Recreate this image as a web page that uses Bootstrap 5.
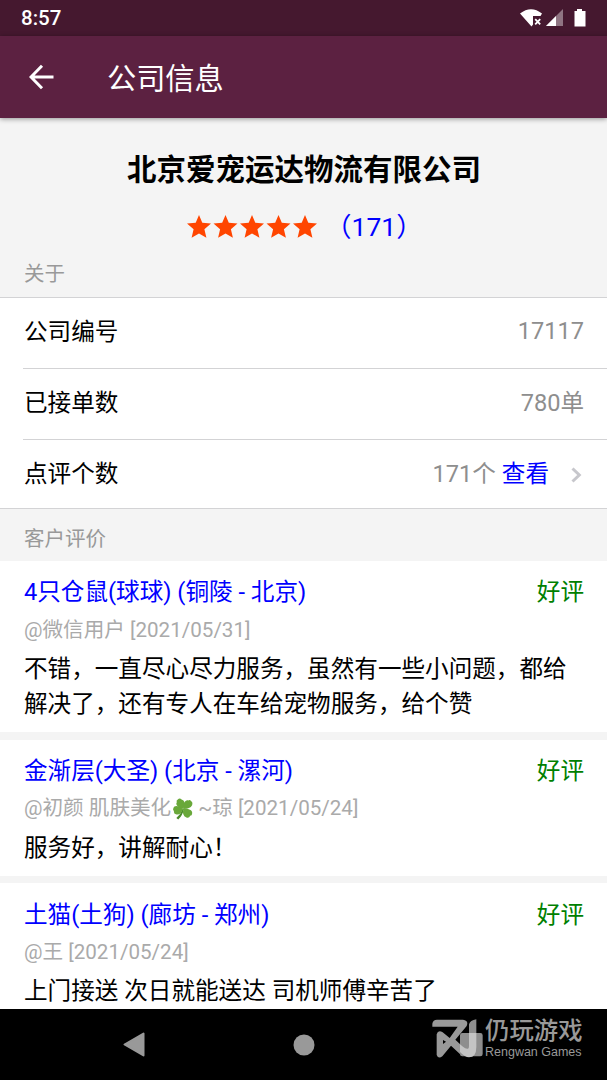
<!DOCTYPE html>
<html lang="zh-CN">
<head>
<meta charset="utf-8">
<meta name="viewport" content="width=device-width, initial-scale=1">
<title>公司信息</title>
<link href="https://cdn.jsdelivr.net/npm/bootstrap@5.3.0/dist/css/bootstrap.min.css" rel="stylesheet">
<style>
  body { font-family: Roboto, "Noto Sans CJK SC", sans-serif; background: #f4f4f4; color: #000; height: 1080px; overflow: hidden; font-size: 23.6px; line-height: 35.4px; }
  svg { display: block; flex: none; }
  .status-bar { height: 36px; background: #45182f; color: #fff; padding: 1px 20px 0 21px; font-size: 20.5px; font-weight: 500; }
  .app-bar { height: 82px; background: #5c2141; color: #fff; padding: 0 29px; box-shadow: 0 1px 5px rgba(0,0,0,.4); position: relative; }
  .app-title { font-size: 29.2px; margin-left: 52px; font-weight: 400; padding-top: 6px; }
  .company { height: 179px; padding-top: 32px; }
  .company-name { font-size: 29.5px; font-weight: 700; line-height: 40px; margin: 0; padding-left: 1px; }
  .rating { height: 40px; margin-top: 17px; font-size: 26.5px; }
  .rating .count { margin-left: 5px; }
  .section-label { font-size: 20.5px; line-height: 30px; color: #999; padding-left: 24px; }
  .info-list { background: #fff; border-top: 1px solid #d3d3d5; border-bottom: 1px solid #d3d3d5; height: 212px; padding-left: 23px; }
  .info-row { height: 71px; padding: 0 23px 0 1px; }
  .info-row:first-child { height: 70px; }
  .info-row + .info-row { border-top: 1px solid #d3d3d5; }
  .info-row .value { color: #8e8e8e; padding-bottom: 1px; }
  .info-row:first-child .value { padding-bottom: 2px; }
  .blue { color: #00f; }
  .review { background: #fff; padding: 14.2px 23px 9.4px 24px; margin-bottom: 7.7px; }
  .review .good { color: #008000; }
  .review .meta { font-size: 20.6px; line-height: 39.4px; margin-bottom: 2px; color: #aaa; }
  .clover { margin: 0 4px 0 2px; }
  .reviews { height: 448px; overflow: hidden; }
  .nav-keys { height: 71px; background: #000; }
  .mark-cn { font-size: 24.4px; line-height: 27px; font-weight: 500; color: #999; }
  .mark-en { font: 12.5px/17px "Liberation Sans", sans-serif; color: #999; }
</style>
</head>
<body>
<div class="status-bar d-flex align-items-center justify-content-between">
  <span>8:57</span>
  <svg width="67" height="20" viewBox="0 0 67 20" fill="#fff">
    <path d="M0 4.5Q11 -4 22 4.5L20.5 7H13V15.500L11.500 17.500Z"/>
    <path d="M15.2 10.2l5 5.2M20.2 10.2l-5 5.2" stroke="#fff" stroke-width="1.8"/>
    <path d="M43 0V17H26Z" opacity=".4"/><path d="M36 7V17H26Z"/>
    <path d="M57 0h5v2h3.5v15.5h-11V2H57z"/>
  </svg>
</div>
<header class="app-bar d-flex align-items-center">
  <svg width="26" height="26" viewBox="0 0 26 26" fill="none" stroke="#fff" stroke-width="3"><path d="M24.5 13H3M13 1.8L2 13l11 11.2"/></svg>
  <h1 class="app-title mb-0">公司信息</h1>
</header>
<main>
  <section class="company d-flex flex-column">
    <h2 class="company-name text-center">北京爱宠运达物流有限公司</h2>
    <div class="rating d-flex align-items-center">
      <svg style="margin-left:187px" width="133" height="26" viewBox="0 0 133 26" fill="#ff4500">
        <defs><path id="star" d="M12 1l3.300 7.800 8.700.7-6.600 5.700 2 8.600L12 19.400l-7.400 4.400 2-8.600L0 9.500l8.700-.7z"/></defs>
        <use href="#star"/><use href="#star" x="26.5"/><use href="#star" x="53"/><use href="#star" x="79.5"/><use href="#star" x="106"/>
      </svg>
      <span class="blue count">（171）</span>
    </div>
    <div class="section-label pt-2 mt-1">关于</div>
  </section>
  <section class="info-list">
    <div class="info-row d-flex align-items-center justify-content-between"><span>公司编号</span><span class="value">17117</span></div>
    <div class="info-row d-flex align-items-center justify-content-between"><span>已接单数</span><span class="value">780单</span></div>
    <div class="info-row d-flex align-items-center"><span>点评个数</span><span class="value ms-auto">171个 <span class="blue">查看</span></span>
      <svg style="margin-left:22px" width="13" height="16" viewBox="0 0 13 16" fill="none" stroke="#c7c7cc" stroke-width="3"><path d="M1.500 1.500L8.300 8l-6.800 6.500"/></svg>
    </div>
  </section>
  <div class="section-label" style="height:52px;padding-top:15px">客户评价</div>
  <section class="reviews">
    <article class="review">
      <div class="d-flex justify-content-between"><span class="blue">4只仓鼠(球球) (铜陵 - 北京)</span><span class="good">好评</span></div>
      <div class="meta">@微信用户 [2021/05/31]</div>
      <div>不错，一直尽心尽力服务，虽然有一些小问题，都给<br>解决了，还有专人在车给宠物服务，给个赞</div>
    </article>
    <article class="review">
      <div class="d-flex justify-content-between"><span class="blue">金渐层(大圣) (北京 - 漯河)</span><span class="good">好评</span></div>
      <div class="meta d-flex align-items-center"><span>@初颜 肌肤美化</span><svg class="clover" width="21" height="24" viewBox="0 0 22 24">
        <path d="M10 12Q8 18 3.500 21.500l2 1.500Q10 19 11.500 12z" fill="#4b8b2c"/>
        <g fill="#69a83a"><path d="M11 12C6 11 2 8 4 5q-1-2 1-3Q7 0 9 2 14 3 11 12z"/><path d="M11 12C10 6 13 2 16 3q2-1 3 1 2 1 1 4Q18 12 11 12z"/><path d="M10.500 12C6 8 1 8 .5 11q-1 2 .500 3-.5 3 2 3.500Q8 19 10.500 12z"/><path d="M11 12c6-1 10 2 9 5q0 2-2 2-1 3-4 2Q9 19 11 12z"/></g>
      </svg><span>~琼 [2021/05/24]</span></div>
      <div>服务好，讲解耐心！</div>
    </article>
    <article class="review mb-0">
      <div class="d-flex justify-content-between"><span class="blue">土猫(土狗) (廊坊 - 郑州)</span><span class="good">好评</span></div>
      <div class="meta">@王 [2021/05/24]</div>
      <div>上门接送 次日就能送达 司机师傅辛苦了</div>
    </article>
  </section>
</main>
<footer class="nav-keys d-flex align-items-center">
  <svg style="margin-left:123px" width="22" height="25" viewBox="0 0 22 25" fill="#999" stroke="#999" stroke-width="2" stroke-linejoin="round"><path d="M1.500 12.500L20.500 1.500V23.500Z"/></svg>
  <svg style="margin-left:148px" width="22" height="22" viewBox="0 0 22 22"><circle cx="11" cy="11" r="10.500" fill="#999"/></svg>
  <svg style="margin-left:117px;margin-bottom:12px" width="51" height="40" viewBox="35 56 153 120">
    <path d="M36 79V70Q38 58 50 58H128Q146 60 139 77L105 118 126 138V168L92 136 66 168Q54 177 49 164V102Q53 88 67 96L88 113 112 79ZM68 119V131L77 124Z" fill="#999" fill-rule="evenodd"/>
    <path d="M146 98V72Q149 60 168 57V98H180q7 0 7 7v56q0 7-7 7h-54q-7 0-7-7v-56q0-7 7-7z" fill="#8e8e8e"/>
    <path d="M126 98H168V140Q168 171 146 171 134 171 119 155V132L126 138Q146 154 146 136V98Z" fill="#c4c4c4"/>
  </svg>
  <div style="margin-left:2px;margin-bottom:11px"><div class="mark-cn">仍玩游戏</div><div class="mark-en">Rengwan Games</div></div>
</footer>
<script src="https://cdn.jsdelivr.net/npm/bootstrap@5.3.0/dist/js/bootstrap.bundle.min.js"></script>
</body>
</html>
